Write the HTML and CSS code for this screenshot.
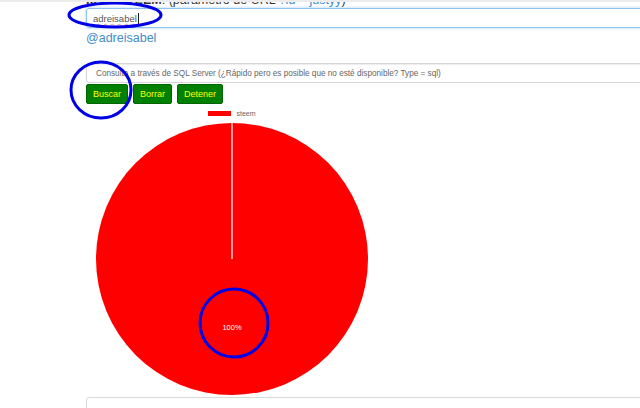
FILE: index.html
```html
<!DOCTYPE html>
<html lang="es">
<head>
    <meta charset="UTF-8">
    <title>Steem</title>
    <link rel="stylesheet" href="styles.css">
</head>
<body>
    <div class="page">
        <div class="label"><b>Id de STEEM</b>: (parámetro de URL <span class="hint">?id = justyy</span>)</div>
        <div class="field focused"><span class="typo">adreisabel</span><span class="caret"></span></div>
        <a class="user" href="#">@adreisabel</a>

        <div class="field sql">Consulta a través de SQL Server (¿Rápido pero es posible que no esté disponible? Type = sql)</div>
        <div class="controls">
            <button class="btn">Buscar</button>
            <button class="btn">Borrar</button>
            <button class="btn">Detener</button>
        </div>

        <div class="chart">
            <div class="legend"><span class="swatch"></span>steem</div>
            <svg class="pie" width="292" height="272" viewBox="0 0 292 272">
                <circle cx="146" cy="136" r="136" fill="#ff0000"/>
                <line x1="146" y1="0" x2="146" y2="136" stroke="#fff" stroke-width="1.2"/>
                <text x="146" y="207" fill="#fff" font-size="7.5" text-anchor="middle" font-family="Liberation Sans, Arial, sans-serif">100%</text>
            </svg>
        </div>

        <div class="panel"></div>
    </div>

    <svg class="marks" width="640" height="408" viewBox="0 0 640 408">
        <ellipse cx="115" cy="15" rx="46" ry="12" fill="none" stroke="#0000e6" stroke-width="3"/>
        <ellipse cx="101" cy="90" rx="30" ry="28" fill="none" stroke="#0000e6" stroke-width="3"/>
        <circle cx="234" cy="323" r="34" fill="none" stroke="#0000e6" stroke-width="3"/>
    </svg>
</body>
</html>
```

FILE: styles.css
```css
* {
    margin: 0;
    padding: 0;
    box-sizing: border-box;
}

html, body {
    overflow: hidden;
    height: 100%;
}

body {
    position: relative;
    border-top: 2px solid #ececec;
    background: #fff;
    font-family: "Liberation Sans", Arial, sans-serif;
    color: #333;
}

.page {
    padding-left: 86px;
    width: 700px;
}

.label {
    margin-top: -9px;
    font-size: 12.5px;
    line-height: 15px;
    color: #333;
    white-space: nowrap;
}

.hint {
    color: #428bca;
}

.field {
    width: 600px;
    height: 20px;
    border: 1px solid #ccc;
    border-radius: 3px;
    padding-left: 6px;
    display: flex;
    align-items: center;
    font-size: 9.5px;
    color: #555;
    white-space: nowrap;
}

.field.focused {
    border-color: #8fc3ee;
    box-shadow: 0 0 3px rgba(102, 175, 233, 0.6);
}

.typo {
    text-decoration: underline wavy #f09090;
    text-decoration-thickness: 1px;
}

.caret {
    display: inline-block;
    width: 1px;
    height: 11px;
    background: #222;
    margin-left: 1px;
}

.user {
    display: block;
    margin-top: 2px;
    font-size: 12.5px;
    line-height: 16px;
    color: #428bca;
    text-decoration: none;
}

.field.sql {
    margin-top: 17px;
    height: 20px;
    padding-left: 9px;
    border-color: #d6d6d6;
    box-shadow: inset 0 1px 1px rgba(0, 0, 0, 0.075);
    font-size: 8.2px;
    color: #666;
}

.controls {
    display: flex;
    gap: 5px;
    margin-top: 1px;
}

.btn {
    height: 20px;
    padding: 0 6px;
    border: 1px solid #006400;
    border-radius: 2px;
    background: #008000;
    color: #ffff00;
    font-family: "Liberation Sans", Arial, sans-serif;
    font-size: 9px;
}

.chart {
    width: 292px;
}

.legend {
    display: flex;
    justify-content: center;
    align-items: center;
    gap: 5px;
    margin-top: 5px;
    height: 8px;
    font-size: 7px;
    color: #666;
}

.swatch {
    width: 23px;
    height: 5px;
    background: #ff0000;
}

.pie {
    display: block;
    margin-top: 6px;
}

.panel {
    margin-top: 2px;
    width: 600px;
    height: 40px;
    border: 1px solid #d8d8d8;
    border-radius: 3px;
}

.marks {
    position: absolute;
    top: -2px;
    left: 0;
    pointer-events: none;
}
```
